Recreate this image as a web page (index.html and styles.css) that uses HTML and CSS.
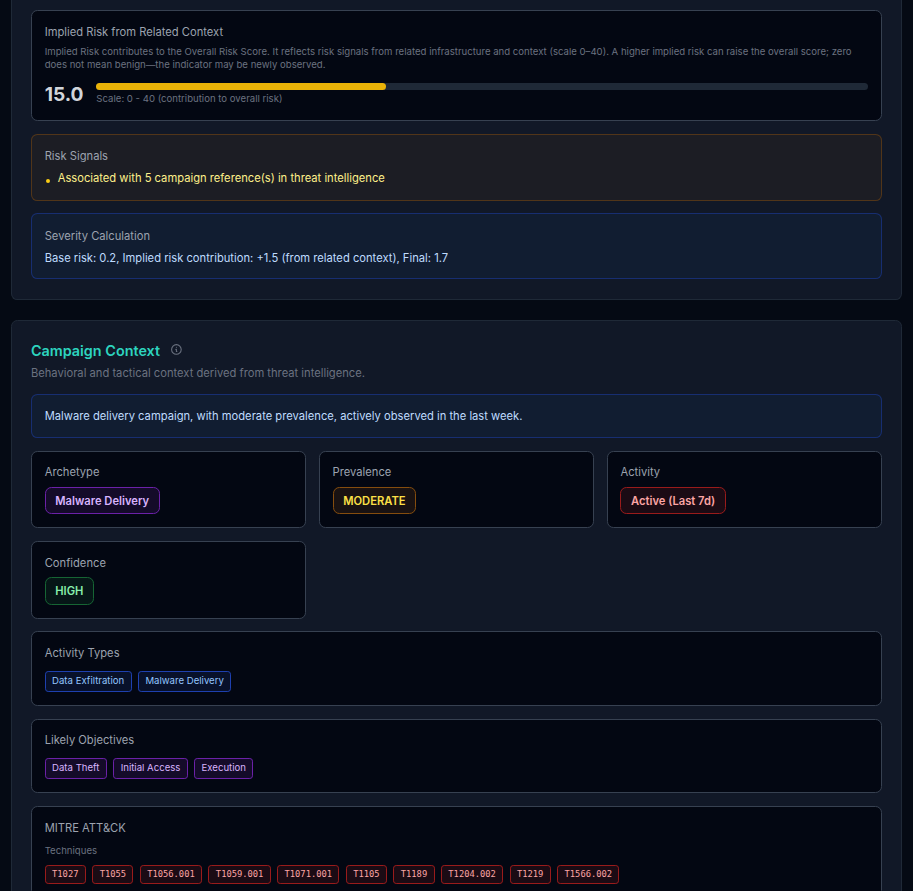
FILE: index.html
```html
<!DOCTYPE html>
<html lang="en">
<head>
    <meta charset="UTF-8">
    <meta name="viewport" content="width=device-width, initial-scale=1.0">
    <title>Indicator Report</title>
    <link rel="stylesheet" href="styles.css">
</head>
<body>
    <main class="page">
        <!-- risk breakdown -->
        <section class="panel panel-risk">
            <div class="card">
                <h3 class="label">Implied Risk from Related Context</h3>
                <p class="hint">Implied Risk contributes to the Overall Risk Score. It reflects risk signals from related infrastructure and context (scale 0–40). A higher implied risk can raise the overall score; zero does not mean benign—the indicator may be newly observed.</p>
                <div class="score-row">
                    <span class="score">15.0</span>
                    <div class="meter">
                        <div class="track"><div class="fill" style="width: 37.5%"></div></div>
                        <div class="scale">Scale: 0 - 40 (contribution to overall risk)</div>
                    </div>
                </div>
            </div>
            <div class="card card-yellow">
                <h3 class="label">Risk Signals</h3>
                <ul class="signals">
                    <li><span class="dot"></span>Associated with 5 campaign reference(s) in threat intelligence</li>
                </ul>
            </div>
            <div class="card card-blue">
                <h3 class="label">Severity Calculation</h3>
                <p>Base risk: 0.2, Implied risk contribution: +1.5 (from related context), Final: 1.7</p>
            </div>
        </section>

        <!-- campaign context -->
        <section class="panel">
            <div class="panel-head">
                <h2>Campaign Context</h2>
                <svg class="info" viewBox="0 0 24 24" fill="none" stroke="currentColor" stroke-width="2" stroke-linecap="round" stroke-linejoin="round">
                    <path d="M13 16h-1v-4h-1m1-4h.01M21 12a9 9 0 11-18 0 9 9 0 0118 0z"/>
                </svg>
            </div>
            <p class="subtitle">Behavioral and tactical context derived from threat intelligence.</p>
            <div class="card card-blue">
                <p>Malware delivery campaign, with moderate prevalence, actively observed in the last week.</p>
            </div>
            <div class="grid">
                <div class="card">
                    <h3 class="label">Archetype</h3>
                    <span class="badge purple">Malware Delivery</span>
                </div>
                <div class="card">
                    <h3 class="label">Prevalence</h3>
                    <span class="badge yellow">MODERATE</span>
                </div>
                <div class="card">
                    <h3 class="label">Activity</h3>
                    <span class="badge red">Active (Last 7d)</span>
                </div>
                <div class="card">
                    <h3 class="label">Confidence</h3>
                    <span class="badge green">HIGH</span>
                </div>
            </div>
            <div class="card card-chips">
                <h3 class="label">Activity Types</h3>
                <div class="chips">
                    <span class="chip blue">Data Exfiltration</span>
                    <span class="chip blue">Malware Delivery</span>
                </div>
            </div>
            <div class="card card-chips">
                <h3 class="label">Likely Objectives</h3>
                <div class="chips">
                    <span class="chip purple">Data Theft</span>
                    <span class="chip purple">Initial Access</span>
                    <span class="chip purple">Execution</span>
                </div>
            </div>
            <div class="card card-chips">
                <h3 class="label">MITRE ATT&amp;CK</h3>
                <h4>Techniques</h4>
                <div class="chips">
                    <span class="chip mono red">T1027</span>
                    <span class="chip mono red">T1055</span>
                    <span class="chip mono red">T1056.001</span>
                    <span class="chip mono red">T1059.001</span>
                    <span class="chip mono red">T1071.001</span>
                    <span class="chip mono red">T1105</span>
                    <span class="chip mono red">T1189</span>
                    <span class="chip mono red">T1204.002</span>
                    <span class="chip mono red">T1219</span>
                    <span class="chip mono red">T1566.002</span>
                </div>
            </div>
        </section>
    </main>
</body>
</html>
```
FILE: styles.css
```css
* {
    box-sizing: border-box;
    margin: 0;
    padding: 0;
}

html {
    font-size: 12.8px;
}

body {
    height: 100vh;
    overflow: hidden;
    background-color: #050a14;
    color: #d1d5db;
    font-family: Inter, sans-serif;
    font-size: 0.875rem;
    line-height: 1.25rem;
}

.page {
    display: flex;
    flex-direction: column;
    gap: 20px;
    padding: 0 11px 0 10.7px;
}

.panel {
    display: flex;
    flex-direction: column;
    gap: 1rem;
    padding: 1.5rem;
    background-color: #111827;
    border: 1px solid #1f2937;
    border-radius: 0.5rem;
}

.panel-risk {
    padding-top: 10.45px;
    border-top: none;
    border-radius: 0 0 0.5rem 0.5rem;
}

.card {
    padding: 1rem;
    background-color: #030712;
    border: 1px solid #374151;
    border-radius: 0.5rem;
}

.label {
    margin-bottom: 0.5rem;
    color: #9ca3af;
    font-size: 0.875rem;
    font-weight: 400;
}

.hint {
    margin: -0.9px 0 10.3px;
    color: #6b7280;
    font-size: 0.75rem;
    line-height: 1rem;
}

.score-row {
    display: flex;
    align-items: center;
    gap: 1rem;
}

.score {
    color: #d1d5db;
    font-size: 1.5rem;
    font-weight: 700;
    line-height: 2rem;
}

.meter {
    flex: 1;
}

.track {
    height: 0.5rem;
    margin-bottom: 0.25rem;
    background-color: #1f2937;
    border-radius: 1rem;
}

.fill {
    height: 100%;
    background-color: #eab308;
    border-radius: 1rem;
}

.scale {
    color: #6b7280;
    font-size: 0.75rem;
    line-height: 1rem;
}

/* tinted cards */
.card-yellow {
    padding-bottom: 13.7px;
    background-color: rgba(113, 63, 18, 0.12);
    border-color: rgba(133, 77, 14, 0.5);
    color: #fef08a;
}

.card-blue {
    background-color: rgba(23, 70, 120, 0.13);
    border-color: rgba(30, 64, 175, 0.5);
    color: #bfdbfe;
}

.card-blue .label {
    padding-top: 0.5px;
    margin-bottom: 5.9px;
}

.signals {
    list-style: none;
}

.signals li {
    display: flex;
    align-items: center;
}

.dot {
    width: 4px;
    height: 4px;
    margin: 5px 8px 0 1px;
    background-color: #facc15;
    border-radius: 50%;
}

/* campaign header */
.panel-head {
    display: flex;
    align-items: center;
    gap: 10px;
    margin-bottom: -9.6px;
}

.panel-head h2 {
    color: #2dd4bf;
    font-size: 1.125rem;
    font-weight: 600;
    line-height: 1.75rem;
}

.info {
    width: 1rem;
    height: 1rem;
    margin-top: -3.6px;
    color: #6b7280;
}

.subtitle {
    color: #6b7280;
}

.grid {
    display: grid;
    grid-template-columns: repeat(3, 1fr);
    gap: 1rem;
}

/* badges and chips */
.badge {
    display: block;
    width: fit-content;
    padding: 0.375rem 0.75rem;
    border: 1px solid;
    border-radius: 0.5rem;
    font-weight: 600;
}

.card-chips .label {
    margin-bottom: 0.75rem;
}

.card-chips h4 {
    margin-bottom: 7px;
    color: #6b7280;
    font-size: 0.75rem;
    font-weight: 400;
    line-height: 1rem;
}

.chips {
    display: flex;
    flex-wrap: wrap;
    gap: 0.5rem;
}

.chip {
    padding: 0.25rem 0.5rem;
    border: 1px solid;
    border-radius: 0.25rem;
    font-size: 0.75rem;
    line-height: 1rem;
}

.mono {
    padding: 2px 0.5rem;
    font-family: "DejaVu Sans Mono", monospace;
    font-size: 8.77px;
}

.purple {
    background-color: rgba(88, 28, 135, 0.2);
    border-color: #6b21a8;
    color: #d8b4fe;
}

.yellow {
    background-color: rgba(113, 63, 18, 0.2);
    border-color: #854d0e;
    color: #fde047;
}

.red {
    background-color: rgba(127, 29, 29, 0.2);
    border-color: #991b1b;
    color: #fca5a5;
}

.green {
    background-color: rgba(20, 83, 45, 0.2);
    border-color: #166534;
    color: #86efac;
}

.blue {
    background-color: rgba(30, 58, 138, 0.2);
    border-color: #1e40af;
    color: #93c5fd;
}
```
